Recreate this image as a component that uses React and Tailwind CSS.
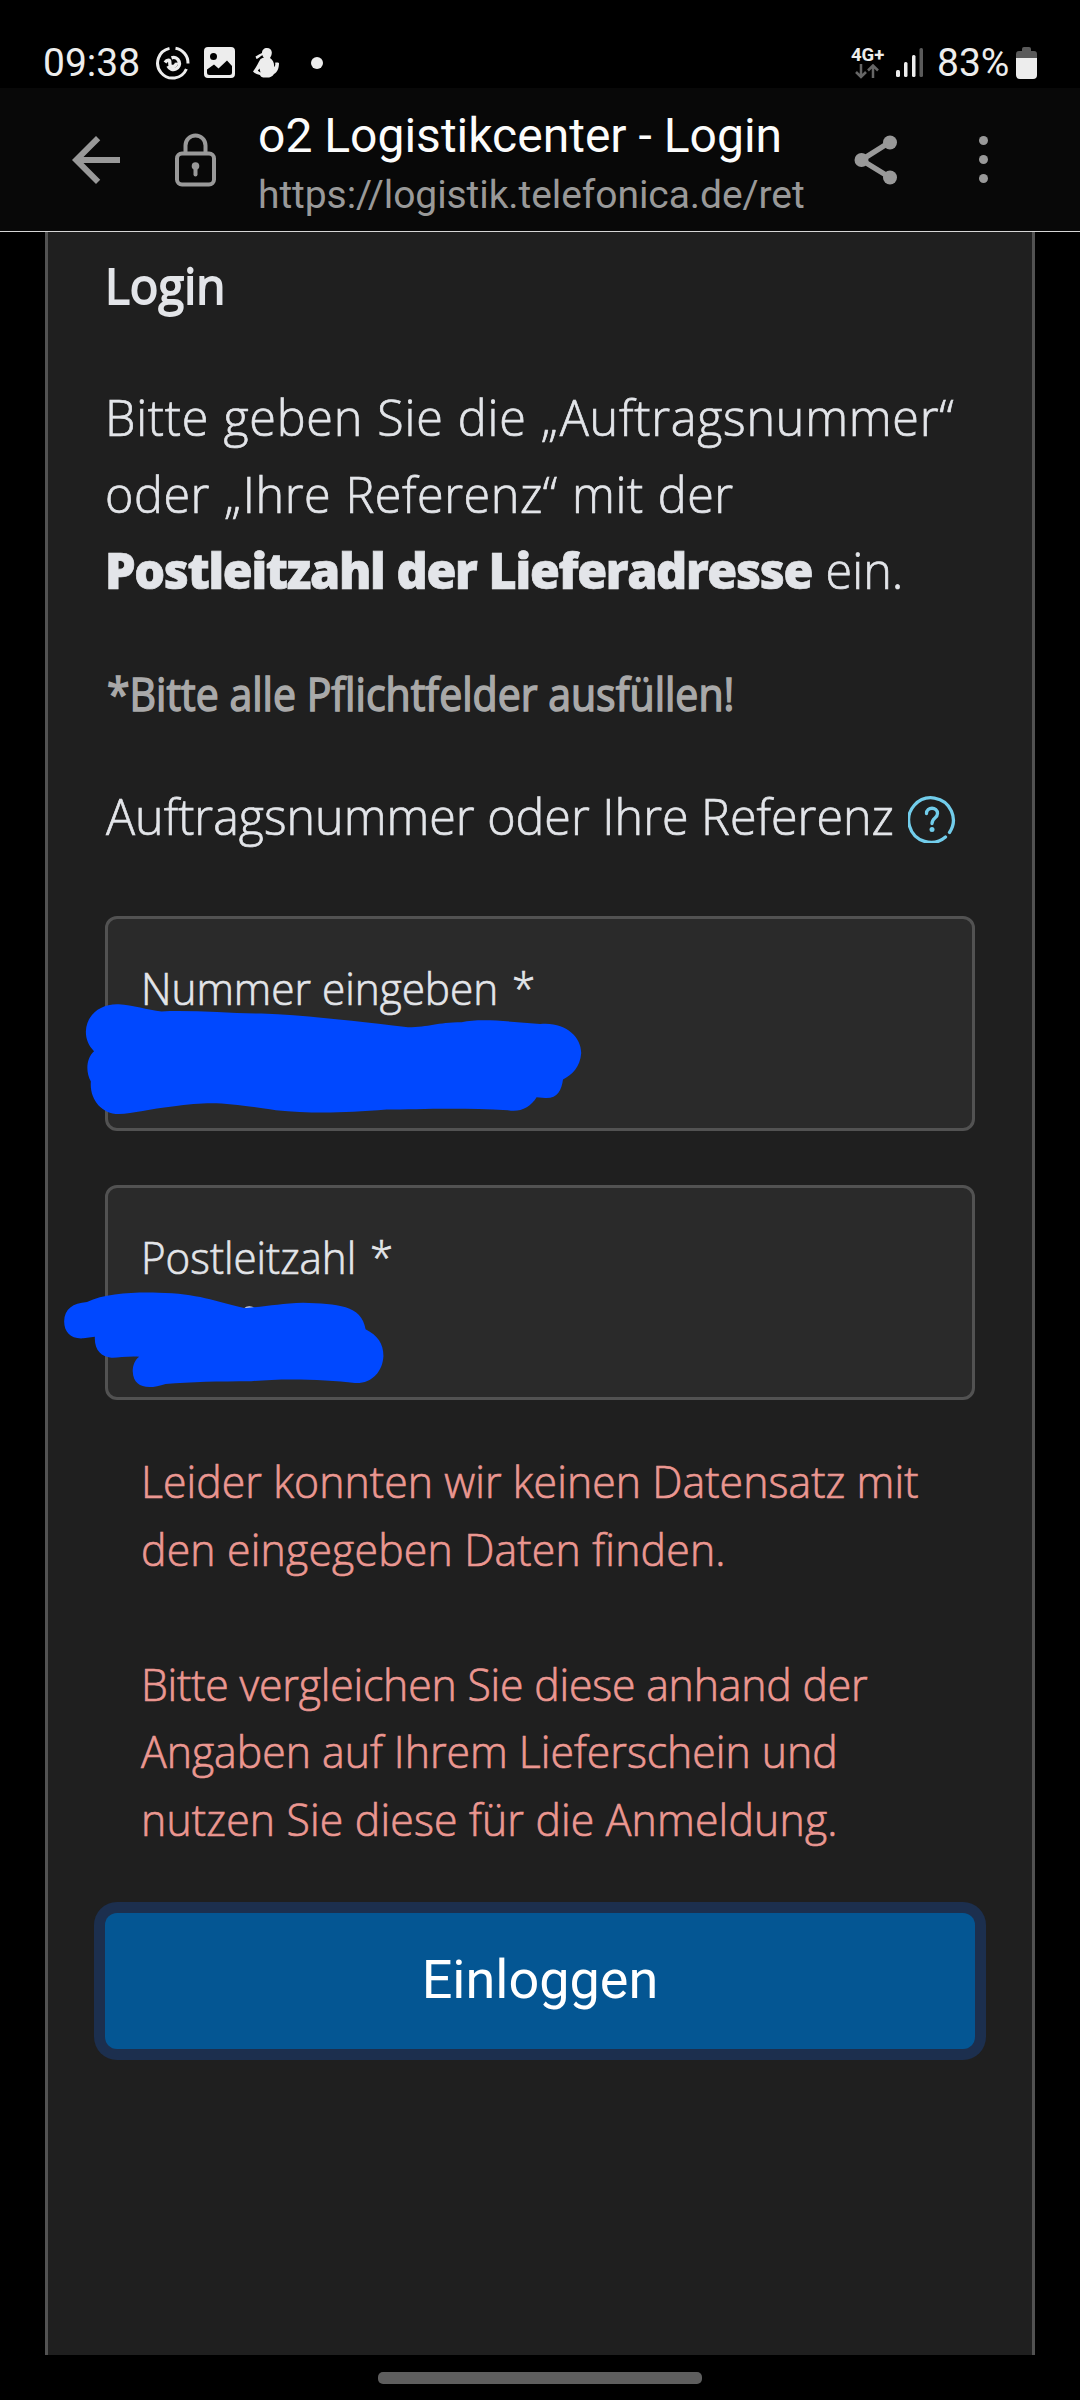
import React, { useState } from 'react';

const StatusBar = () => (
  <div className="flex h-[88px] items-center justify-between bg-black px-[43px] pt-[37px] text-[#ededed]">
    <div className="flex items-center">
      <span className="w-[113px] text-[39px] leading-[46px]">09:38</span>
      <svg className="h-[34px] w-[34px]" viewBox="0 0 34 34" fill="none" stroke="currentColor" strokeWidth="3">
        <path d="M13.5 2.4A15 15 0 1 0 30.4 23" />
        <path d="M19.5 2.2A15 15 0 0 1 32 17.5" />
        <path d="M15.5 11.8A6 6 0 1 1 12 20" strokeWidth="3.4" />
        <path d="M20.4 16.6A3.6 3.6 0 0 1 14.3 19.4C13 17 15 14.5 12.3 14.3C10.8 14.3 10 15 9 16.5" strokeWidth="3.4" />
      </svg>
      <svg className="ml-[14px] h-[31px] w-[31px]" viewBox="0 0 31 31">
        <path fill="currentColor" fillRule="evenodd" d="M4 0H27A4 4 0 0 1 31 4V27A4 4 0 0 1 27 31H4A4 4 0 0 1 0 27V4A4 4 0 0 1 4 0ZM9.5 6A3.5 3.5 0 1 0 9.5 13A3.5 3.5 0 1 0 9.5 6ZM3 22.5V25.5A2.5 2.5 0 0 0 5.5 28H25.5A2.5 2.5 0 0 0 28 25.5V19L23 13.5L14.5 21.5L10 17.5Z" />
      </svg>
      <svg className="ml-[18px] h-[30px] w-[26px]" viewBox="0 0 26 30" fill="currentColor">
        <path d="M9 5C9 2 11 0 14 0C17 0 19 2 18.8 5C18.6 7 18 8.5 17 10C20 12 21.5 15 21 19C22.5 17.5 22.5 16 22 14.5C23 15 23.5 14 26 15C26 20 24.5 24 21 26C19 29 16 30 12.5 29.5C9 29.5 8 29 7 27C4 26 1.5 25.5 0 23.5C3 20 5 15 7.5 11C9 10 10 10 11 9.5C9.5 8.5 9.5 7.5 9.5 7C7 8.5 5 10.5 3.5 11L2.5 8.5C5 7 7 6 9 5ZM6.5 20.5L4.8 22.8L7.5 24.5Z" fillRule="evenodd" />
      </svg>
      <span className="ml-[32px] h-3 w-3 rounded-full bg-[#ededed]"></span>
    </div>
    <div className="flex items-center">
      <div className="flex w-[45px] flex-col">
        <span className="text-[18.5px] font-bold leading-[17px]">4G+</span>
        <svg className="ml-1 h-[15px] w-[24px]" viewBox="0 0 24 15" fill="none" stroke="#666" strokeWidth="2.5">
          <path d="M6 0V13M1 8L6 13L11 8M18 14V1.5M13 6.5L18 1.5L23 6.5" />
        </svg>
      </div>
      <svg className="h-[30px] w-[27px]" viewBox="0 0 27 30">
        <rect x="0" y="22" width="4" height="7" rx="1.5" fill="currentColor" />
        <rect x="8" y="14" width="3.5" height="15" rx="1.5" fill="currentColor" />
        <rect x="16" y="7" width="3.5" height="22" rx="1.5" fill="currentColor" />
        <rect x="23.5" y="0" width="3.5" height="29" rx="1.5" fill="#5a5a5a" />
      </svg>
      <span className="ml-[14px] w-[79px] text-[39px] leading-[46px]">83%</span>
      <svg className="h-8 w-[21px]" viewBox="0 0 21 32">
        <path d="M0 11V7A3 3 0 0 1 3 4H6V2A2 2 0 0 1 8 0H13A2 2 0 0 1 15 2V4H18A3 3 0 0 1 21 7V11Z" fill="#5a5a5a" />
        <path d="M0 11H21V28A4 4 0 0 1 17 32H4A4 4 0 0 1 0 28Z" fill="currentColor" />
      </svg>
    </div>
  </div>
);

const BrowserBar = () => (
  <header className="flex h-36 items-center border-b border-[#d6d6d6] bg-[#080808] text-[#999]">
    <button className="ml-[60px]">
      <svg className="h-[72px] w-[72px]" viewBox="0 0 24 24" fill="currentColor">
        <path d="M20 11H7.83l5.59-5.59L12 4l-8 8 8 8 1.41-1.41L7.83 13H20v-2z" />
      </svg>
    </button>
    <svg className="ml-[43px] h-[54px] w-[41px]" viewBox="0 0 41 54" fill="none" stroke="currentColor" strokeWidth="4">
      <rect x="2" y="20.5" width="37" height="31" rx="5" />
      <path d="M10.5 20.5V12.5A10 10 0 0 1 30.5 12.5V20.5" />
      <circle cx="20.5" cy="33" r="3.8" fill="currentColor" stroke="none" />
      <path d="M20.5 33V41.5" strokeLinecap="round" />
    </svg>
    <div className="ml-[42px] w-[548px] overflow-hidden whitespace-nowrap pt-[10px]">
      <h1 className="text-[48px] leading-[56px] text-[#fcfcfc]">o2 Logistikcenter - Login</h1>
      <p className="mt-1 text-[39px] leading-[54px] tracking-[-0.08px]">https://logistik.telefonica.de/ret</p>
    </div>
    <svg className="ml-[48px] h-[50px] w-[44px]" viewBox="0 0 44 50" fill="currentColor">
      <path d="M36 7L7.5 25L36 42.5" fill="none" stroke="currentColor" strokeWidth="5.5" />
      <circle cx="36" cy="7.5" r="7" />
      <circle cx="7.5" cy="25" r="7" />
      <circle cx="36" cy="42.5" r="7" />
    </svg>
    <div className="ml-[81px] flex flex-col gap-[10px]">
      <span className="h-[9px] w-[9px] rounded-full bg-[#999]"></span>
      <span className="h-[9px] w-[9px] rounded-full bg-[#999]"></span>
      <span className="h-[9px] w-[9px] rounded-full bg-[#999]"></span>
    </div>
  </header>
);

const LoginForm = () => {
  const [error] = useState(true);

  return (
    <main className="mx-[45px] h-[2123px] border-x-[3px] border-[#525252] bg-[#1f1f1f] px-[57px] pt-[15px] font-['Open_Sans',sans-serif] font-light text-[#e3e5e9] whitespace-nowrap [-webkit-text-stroke:0.7px]">
      <h2 className="origin-left scale-x-[0.95] text-[50px] font-normal leading-[76px] [-webkit-text-stroke:1.8px]">Login</h2>

      <p className="mt-14 origin-left scale-x-[0.97] text-[50px] leading-[76.5px] [word-spacing:1px]">
        <span className="block tracking-[0.75px]">Bitte geben Sie die „Auftragsnummer“</span>
        <span className="block tracking-[0.55px]">oder „Ihre Referenz“ mit der</span>
        <span className="block"><b className="font-extrabold tracking-[-1.4px]">Postleitzahl der Lieferadresse</b> ein.</span>
      </p>

      <p className="ml-0.5 mt-[51px] origin-left scale-x-[0.912] text-[45px] font-normal leading-[67.5px] text-[#a9a9a9] [-webkit-text-stroke:1.5px]">*Bitte alle Pflichtfelder ausfüllen!</p>

      <div className="mt-[50px] flex h-[76px] items-center">
        <span className="ml-px w-[801px] origin-left scale-x-[0.968] pt-px text-[50px] leading-[76px]">Auftragsnummer oder Ihre Referenz</span>
        <svg className="ml-px mt-[8px] h-12 w-12 shrink-0" viewBox="0 0 48 48" fill="none" stroke="#72cdeb" strokeWidth="3.3" strokeLinecap="round">
          <path d="M41.5 37.5A22.3 22.3 0 1 0 37.5 42" />
          <path d="M18.5 18.5C18.5 11.5 29.5 11.5 29.5 18.5C29.5 23.5 24 22.5 24 28.5" />
          <circle cx="24" cy="34.5" r="2.5" fill="#72cdeb" stroke="none" />
        </svg>
      </div>

      <div className="relative mt-[63px] h-[215px] rounded-xl border-[3px] border-[#525252] bg-[#2a2a2a] px-[33px] pt-[35px]">
        <label className="block origin-left scale-x-[0.94] text-[45px] leading-[67px]">Nummer eingeben <span className="ml-[3px]">*</span></label>
        <svg className="absolute -left-[25px] top-[81px] h-[118px] w-[500px]" viewBox="150 1120 1400 330" preserveAspectRatio="none" fill="#0048ff">
          <path d="M158 1208C160 1160 200 1130 250 1132C290 1134 330 1148 370 1152C460 1148 560 1158 650 1158C790 1164 900 1178 1060 1196C1120 1196 1140 1182 1210 1182C1270 1170 1350 1182 1430 1187C1500 1180 1545 1222 1545 1268C1542 1308 1520 1328 1494 1342C1490 1372 1478 1396 1444 1394L1420 1392C1404 1420 1370 1436 1340 1428C1200 1420 1080 1426 1000 1426C880 1436 790 1438 690 1428C560 1410 520 1400 400 1418C340 1424 290 1438 250 1439C200 1438 168 1396 172 1348C156 1318 160 1282 181 1263C166 1248 158 1230 158 1208Z" />
        </svg>
      </div>

      <div className="relative mt-[54px] h-[215px] rounded-xl border-[3px] border-[#525252] bg-[#2a2a2a] px-[33px] pt-[35px]">
        <label className="block origin-left scale-x-[0.935] text-[45px] leading-[67px]">Postleitzahl <span className="ml-[3px]">*</span></label>
        <svg className="absolute -left-[46px] top-[102px] h-[100px] w-[325px]" viewBox="90 390 910 300" preserveAspectRatio="none" fill="#0048ff">
          <path d="M598 446Q614 432 632 446Z" fill="#d8dce8" />
          <path d="M96 484C97 446 120 430 160 426C210 400 290 396 360 398C470 400 520 424 600 444C660 440 700 430 765 428C860 432 930 434 940 508C974 526 990 552 990 588C988 636 956 672 910 669C830 658 700 654 620 664C530 664 450 666 380 672C330 690 290 684 288 634C288 616 294 600 306 590C270 588 246 594 228 593C200 590 180 570 182 530L150 535C116 538 96 518 96 484Z" />
        </svg>
      </div>

      {error && (
        <p className="ml-9 mt-[47px] h-[405px] origin-left scale-x-[0.95] text-[45px] leading-[67.5px] text-[#eb9791]">
          <span className="block tracking-[0.08px]">Leider konnten wir keinen Datensatz mit</span>
          <span className="block tracking-[0.2px]">den eingegeben Daten finden.</span>
          <br />
          <span className="block tracking-[-0.2px]">Bitte vergleichen Sie diese anhand der</span>
          <span className="block">Angaben auf Ihrem Lieferschein und</span>
          <span className="block tracking-[0.18px]">nutzen Sie diese für die Anmeldung.</span>
        </p>
      )}

      <button className="mt-[61px] h-[136px] w-full rounded-xl bg-[#045693] pb-1 font-[Roboto] text-[54px] font-normal text-white ring-[11px] ring-[#1c2f4e] [-webkit-text-stroke:0]">
        Einloggen
      </button>
    </main>
  );
};

const App = () => (
  <div className="h-[2400px] w-[1080px] overflow-hidden bg-black font-[Roboto,sans-serif]">
    <StatusBar />
    <BrowserBar />
    <LoginForm />
    <div className="mx-auto mt-[17px] h-3 w-[324px] rounded-[5px] bg-[#5e5e5e]"></div>
  </div>
);

export default App;
